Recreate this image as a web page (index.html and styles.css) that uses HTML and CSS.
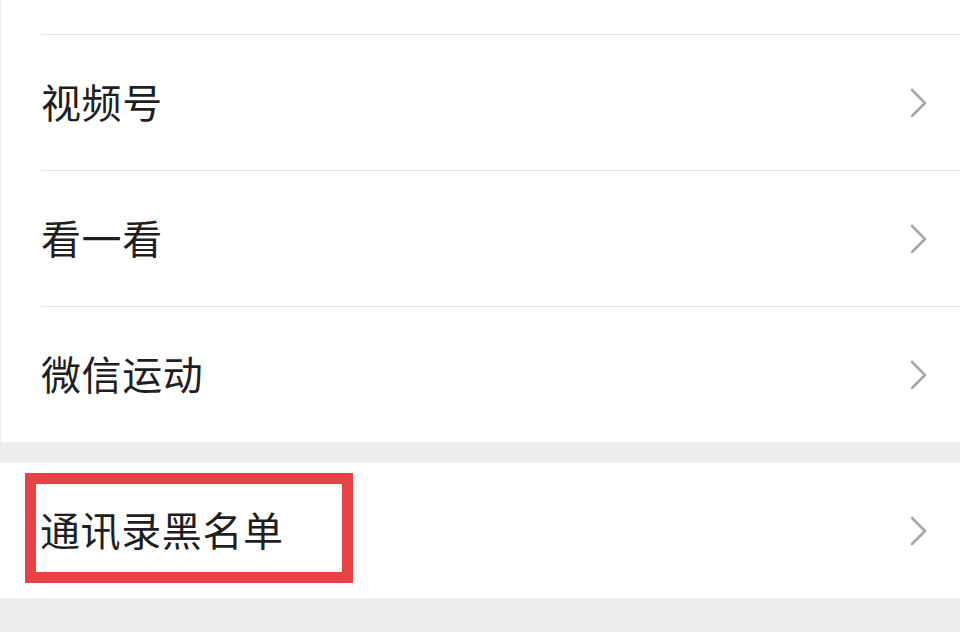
FILE: index.html
```html
<!DOCTYPE html>
<html lang="zh-CN">
  <head>
    <meta charset="UTF-8" />
    <meta name="viewport" content="width=device-width, initial-scale=1" />
    <title>设置</title>
    <link rel="stylesheet" href="styles.css">
  </head>
  <body>
    <section class="group group-first">
      <div class="row row-cut"></div>
      <div class="row">
        <span class="label">视频号</span>
        <svg class="chevron" viewBox="0 0 17 30"><polyline points="2,2 15,15 2,28" /></svg>
      </div>
      <div class="row">
        <span class="label">看一看</span>
        <svg class="chevron" viewBox="0 0 17 30"><polyline points="2,2 15,15 2,28" /></svg>
      </div>
      <div class="row">
        <span class="label">微信运动</span>
        <svg class="chevron" viewBox="0 0 17 30"><polyline points="2,2 15,15 2,28" /></svg>
      </div>
    </section>

    <div class="spacer"></div>

    <section class="group">
      <div class="row row-single">
        <span class="label">通讯录黑名单</span>
        <svg class="chevron" viewBox="0 0 17 30"><polyline points="2,2 15,15 2,28" /></svg>
        <!-- annotation box drawn over the row -->
        <span class="mark"></span>
      </div>
    </section>

    <div class="spacer spacer-bottom"></div>
    <div class="tail"></div>
  </body>
</html>
```

FILE: styles.css
```css
:root {
  --bg: #ededed;
  --panel: #ffffff;
  --line: #e9e9e9;
  --text: #1f1f1f;
  --arrow: #a6a6a6;
  --mark: #e94245;
}

* {
  box-sizing: border-box;
}

body {
  margin: 0;
  background: var(--bg);
  font-family: "Noto Sans CJK SC", "Noto Sans", sans-serif;
  color: var(--text);
  overflow: hidden;
}

/* ───────────  groups  ─────────── */
.group {
  background: var(--panel);
}

.group-first {
  border-left: 1px solid #ececec;
}

.row {
  position: relative;
  height: 136px;
  margin-left: 40px;
  padding-right: 33px;
  display: flex;
  align-items: center;
  justify-content: space-between;
  border-top: 1px solid var(--line);
}

.row-cut {
  height: 34px;
  border-top: none;
}

.row-single {
  height: 135px;
  border-top: none;
}

.label {
  font-size: 40px;
  line-height: 1;
  letter-spacing: 0.6px;
  margin-bottom: 3px;
}

.chevron {
  width: 17px;
  height: 30px;
  fill: none;
  stroke: var(--arrow);
  stroke-width: 2.6;
  stroke-linecap: round;
  stroke-linejoin: round;
}

.mark {
  position: absolute;
  left: -15px;
  top: 10px;
  width: 328px;
  height: 110px;
  border: 11px solid var(--mark);
}

/* ───────────  spacers  ─────────── */
.spacer {
  height: 21px;
}

.spacer-bottom {
  height: 34px;
}

.tail {
  height: 20px;
  background: var(--panel);
}
```
